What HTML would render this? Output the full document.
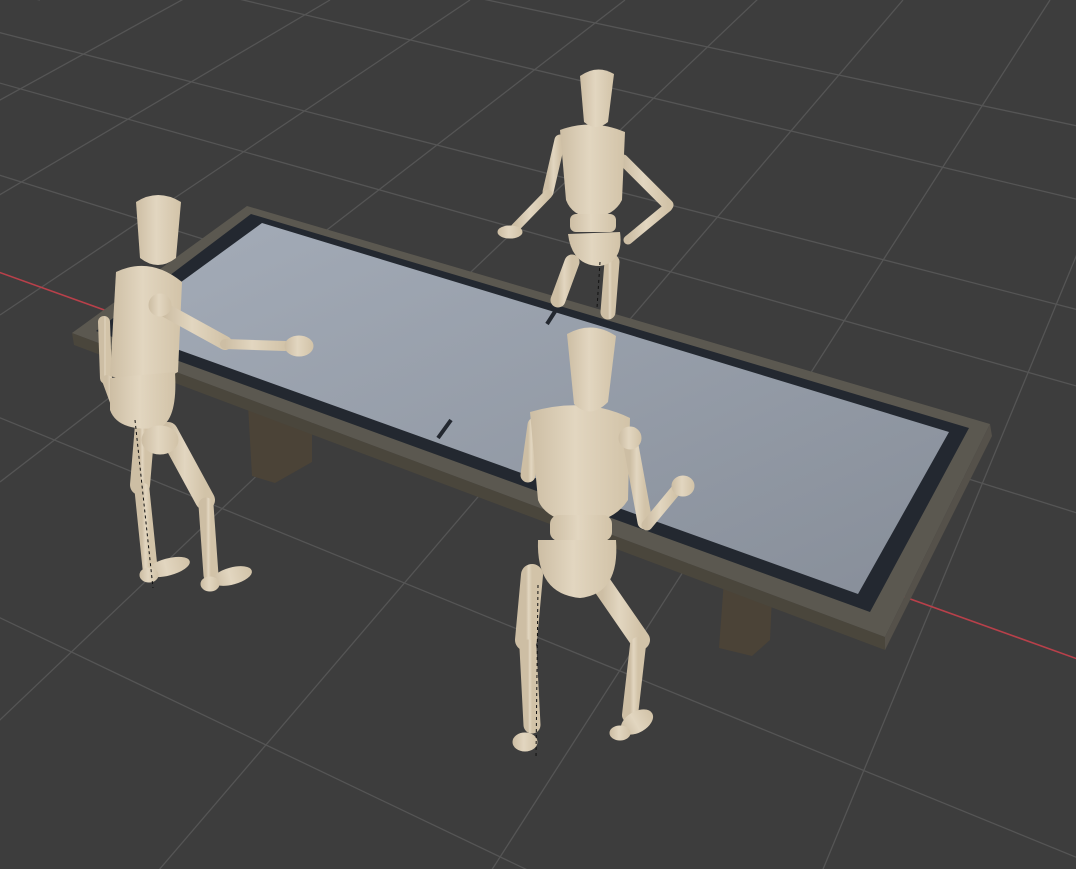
<!DOCTYPE html>
<html><head><meta charset="utf-8"><style>
html,body{margin:0;padding:0;background:#3d3d3d;overflow:hidden;width:1076px;height:869px}
svg{display:block;position:absolute;left:0;top:0}
</style></head><body>
<svg width="1076" height="869" viewBox="0 0 1076 869" xmlns="http://www.w3.org/2000/svg">
<defs>
<linearGradient id="top" x1="0" y1="0" x2="1" y2="1">
<stop offset="0" stop-color="#a4acb8"/><stop offset="1" stop-color="#878e99"/></linearGradient>
<linearGradient id="wood" x1="0" y1="0" x2="1" y2="0">
<stop offset="0" stop-color="#cdbea4"/><stop offset="0.45" stop-color="#e2d6c0"/><stop offset="1" stop-color="#d2c3a8"/></linearGradient>
</defs>
<rect width="1076" height="869" fill="#3d3d3d"/>
<g stroke="#555" stroke-width="1.3" fill="none">
<line x1="-100" y1="7" x2="1176" y2="335"/>
<line x1="-100" y1="-82" x2="1176" y2="223"/>
<line x1="300" y1="-40" x2="1176" y2="147"/>
<line x1="-100" y1="55" x2="1176" y2="414"/>
<line x1="-100" y1="144" x2="1176" y2="544"/>
<line x1="-100" y1="377" x2="1176" y2="898"/>
<line x1="-100" y1="570" x2="1176" y2="1180"/>
<line x1="-100" y1="-30" x2="40" y2="0"/>
<line x1="-60" y1="133" x2="200" y2="-10"/>
<line x1="-60" y1="230" x2="330" y2="0"/>
<line x1="0" y1="315" x2="470" y2="0"/>
<line x1="0" y1="482" x2="625" y2="0"/>
<line x1="-100" y1="815" x2="760" y2="-3"/>
<line x1="117" y1="919" x2="903" y2="0"/>
<line x1="450" y1="935" x2="1050" y2="0"/>
<line x1="800" y1="925" x2="1120" y2="150"/>
</g>
<line x1="-10" y1="269" x2="1086" y2="662" stroke="#b8404a" stroke-width="1.6"/>
<polygon points="248,405 312,425 312,462 275,483 252,476" fill="#4b4337"/>
<polygon points="724,580 772,596 770,640 752,656 719,648" fill="#4b4337"/>
<polygon points="72,333 885,637 885,650 74,345" fill="#4a463c"/>
<polygon points="885,637 990,424 992,436 885,650" fill="#55514a"/>
<polygon points="247,206 990,424 885,637 72,333" fill="#5b5850"/>
<polygon points="251,214 969,428 870,612 96,331" fill="#232830"/>
<polygon points="262,223 949,432 858,594 118,328" fill="url(#top)"/>
<line x1="556" y1="310" x2="547" y2="324" stroke="#232830" stroke-width="4"/>
<line x1="451" y1="420" x2="438" y2="438" stroke="#232830" stroke-width="4"/>

<g fill="url(#wood)" stroke="url(#wood)" stroke-linecap="round">
<line x1="572" y1="262" x2="558" y2="300" stroke-width="15"/>
<line x1="612" y1="262" x2="608" y2="312" stroke-width="15"/>
<line x1="560" y1="140" x2="548" y2="192" stroke-width="11"/>
<line x1="548" y1="194" x2="515" y2="228" stroke-width="9"/>
<ellipse cx="510" cy="232" rx="12" ry="6"/>
<line x1="623" y1="160" x2="668" y2="205" stroke-width="11"/>
<line x1="668" y1="207" x2="628" y2="240" stroke-width="9"/>
<path d="M560 130 Q592 118 625 132 L622 200 Q614 216 592 218 Q572 216 566 200 Z" stroke="none"/>
<rect x="570" y="214" width="46" height="18" rx="6" stroke="none"/>
<path d="M568 234 L620 232 Q624 262 600 266 Q572 266 568 234 Z" stroke="none"/>
<path d="M580 76 Q597 64 614 74 L608 122 Q596 132 584 122 Z" stroke="none"/>
<line x1="145" y1="425" x2="140" y2="485" stroke-width="20"/>
<line x1="142" y1="490" x2="150" y2="568" stroke-width="15"/>
<ellipse cx="168" cy="567" rx="22" ry="8" transform="rotate(-15 168 567)"/>
<ellipse cx="149" cy="575" rx="9" ry="7"/>
<line x1="168" y1="432" x2="205" y2="500" stroke-width="20"/>
<line x1="206" y1="505" x2="211" y2="575" stroke-width="15"/>
<ellipse cx="232" cy="576" rx="20" ry="8" transform="rotate(-15 232 576)"/>
<ellipse cx="210" cy="584" rx="9" ry="7"/>
<line x1="104" y1="322" x2="106" y2="378" stroke-width="12"/>
<line x1="107" y1="380" x2="118" y2="410" stroke-width="10"/>
<path d="M116 272 Q150 256 182 282 L178 372 Q150 388 110 376 Z" stroke="none"/>
<path d="M110 378 L175 372 Q178 422 158 428 Q118 432 110 410 Z" stroke="none"/>
<ellipse cx="160" cy="440" rx="18" ry="14"/>
<line x1="165" y1="310" x2="225" y2="343" stroke-width="14"/>
<line x1="225" y1="344" x2="285" y2="346" stroke-width="10"/>
<ellipse cx="299" cy="346" rx="14" ry="10"/>
<circle cx="160" cy="305" r="11"/>
<path d="M136 202 Q158 188 181 202 L176 258 Q158 272 140 258 Z" stroke="none"/>
<line x1="532" y1="575" x2="526" y2="640" stroke-width="22"/>
<line x1="528" y1="648" x2="532" y2="725" stroke-width="17"/>
<ellipse cx="525" cy="742" rx="12" ry="9"/>
<line x1="602" y1="585" x2="640" y2="640" stroke-width="20"/>
<line x1="638" y1="645" x2="630" y2="715" stroke-width="16"/>
<ellipse cx="637" cy="722" rx="17" ry="10" transform="rotate(-30 637 722)"/>
<ellipse cx="620" cy="733" rx="10" ry="7"/>
<line x1="535" y1="425" x2="528" y2="475" stroke-width="15"/>
<path d="M530 412 Q585 396 630 418 L628 500 Q614 522 580 524 Q546 520 538 500 Z" stroke="none"/>
<rect x="550" y="515" width="62" height="26" rx="9" stroke="none"/>
<path d="M538 540 L616 540 Q620 594 580 598 Q536 594 538 540 Z" stroke="none"/>
<line x1="630" y1="440" x2="645" y2="522" stroke-width="15"/>
<line x1="647" y1="525" x2="676" y2="490" stroke-width="11"/>
<ellipse cx="683" cy="486" rx="11" ry="10"/>
<circle cx="630" cy="438" r="11"/>
<path d="M567 334 Q592 320 616 336 L608 402 Q590 420 574 404 Z" stroke="none"/>
</g>
<g stroke="#111" stroke-width="1" stroke-dasharray="3,3" fill="none">
<line x1="135" y1="420" x2="153" y2="588"/>
<line x1="538" y1="585" x2="536" y2="758"/>
<line x1="600" y1="262" x2="597" y2="308"/>
</g>
</svg>
</body></html>
